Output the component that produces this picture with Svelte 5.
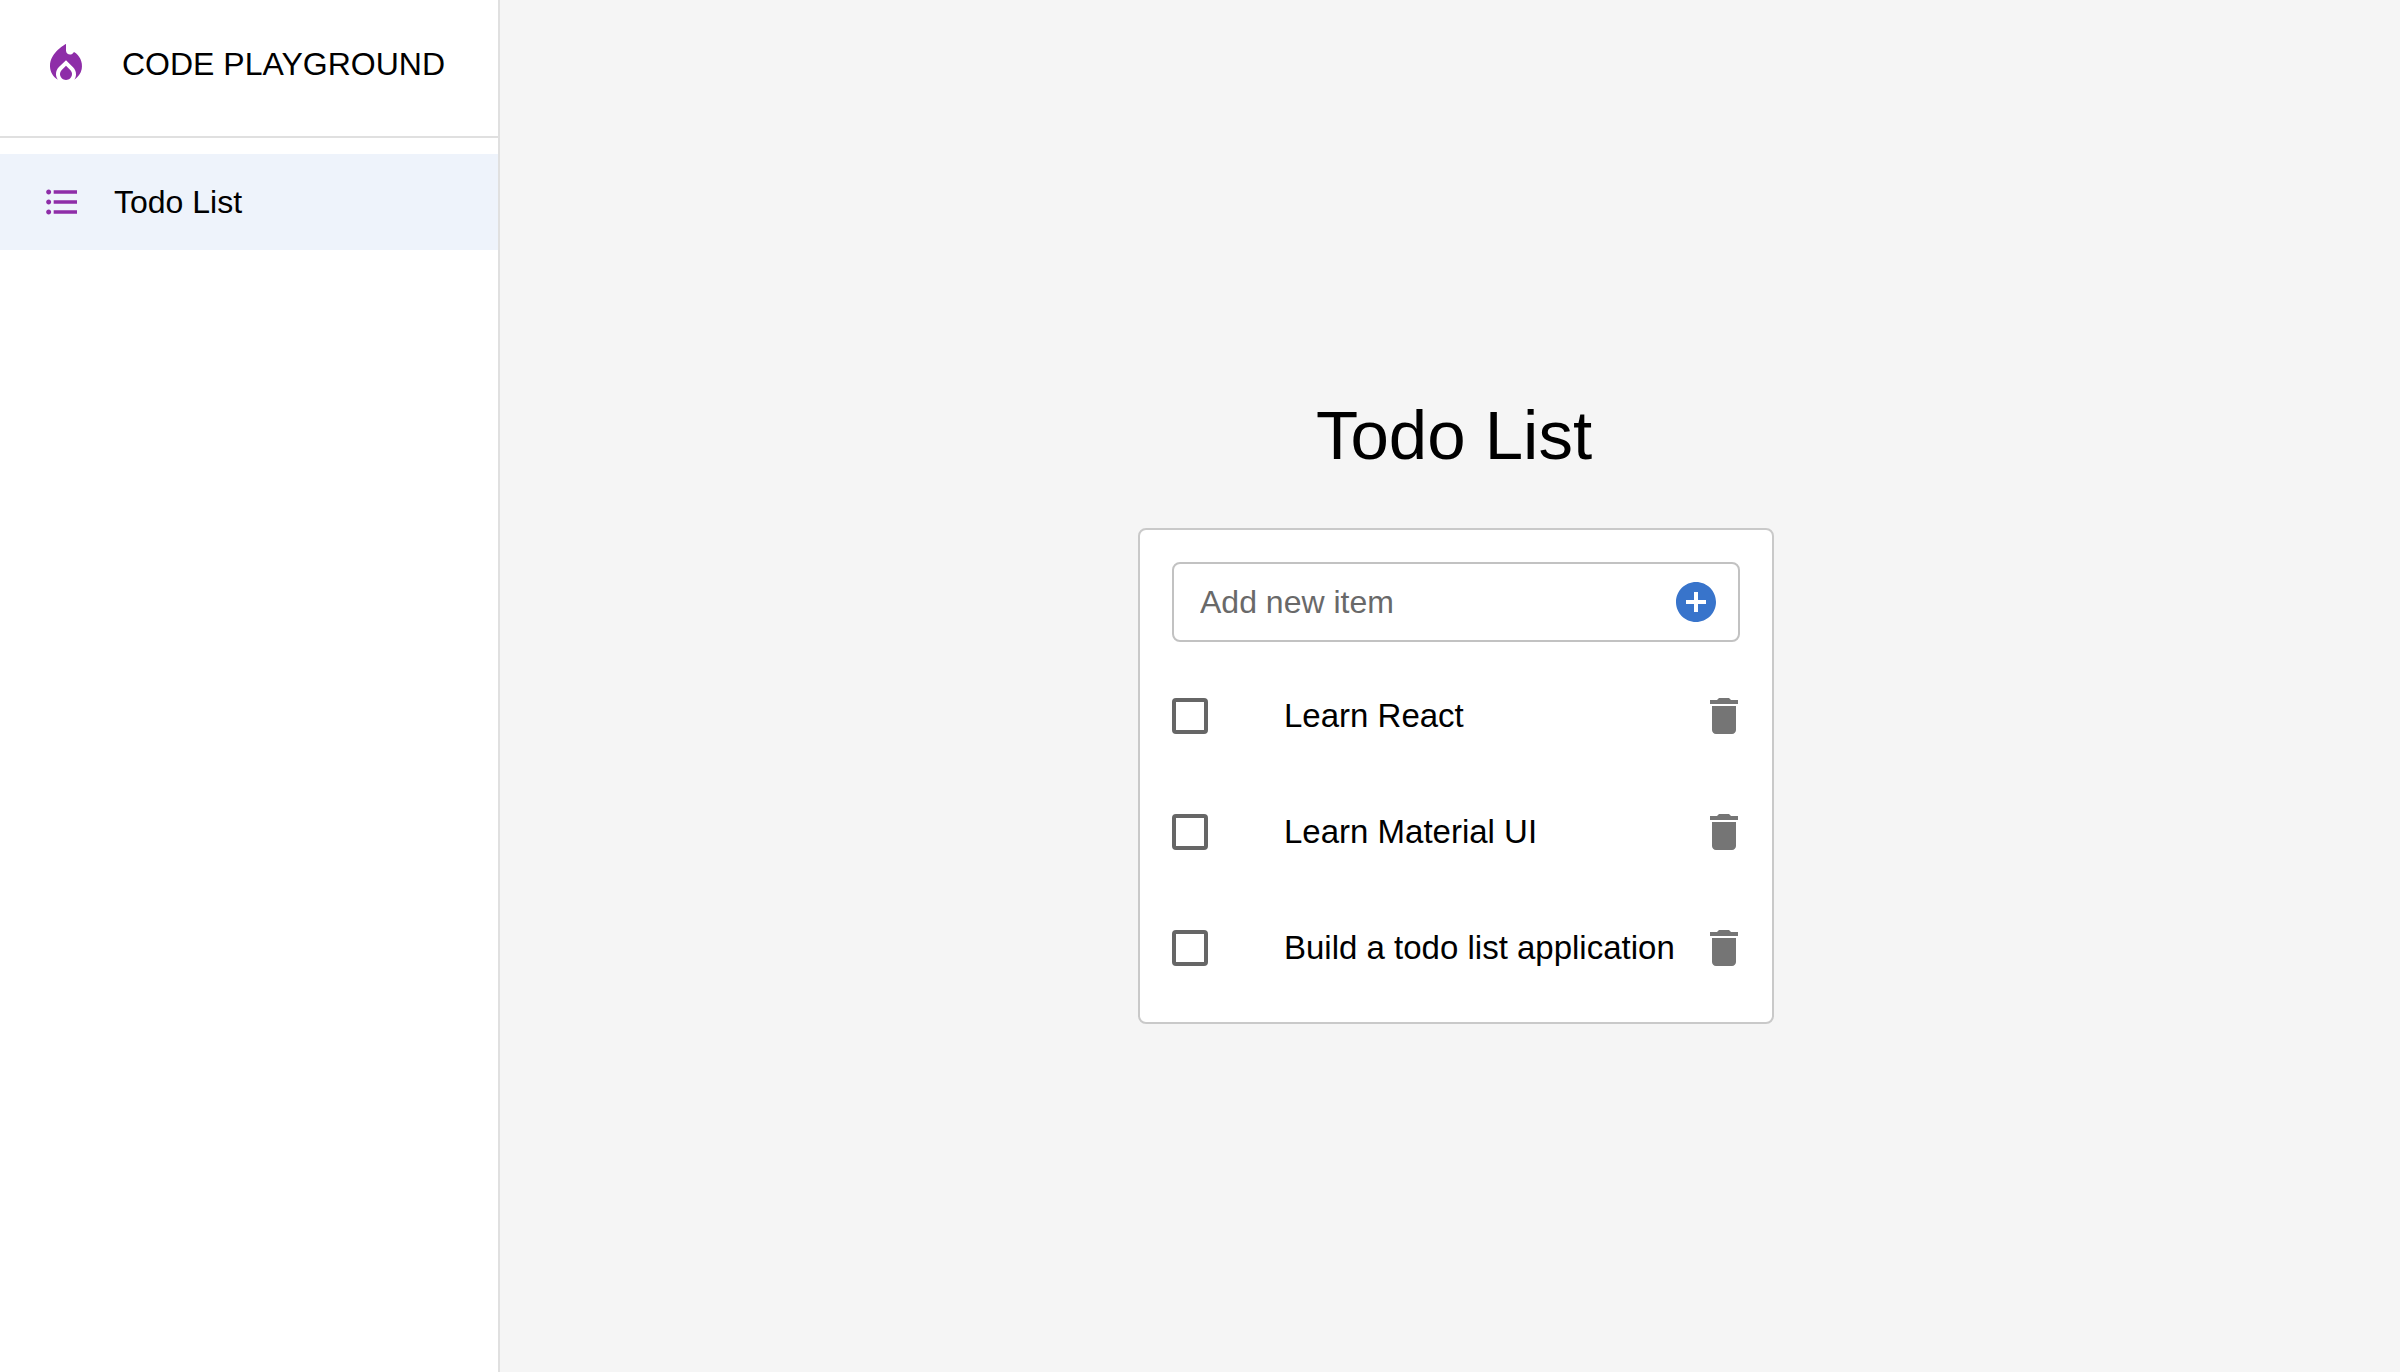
<script>
  let items = $state([
    { id: 1, text: 'Learn React', done: false },
    { id: 2, text: 'Learn Material UI', done: false },
    { id: 3, text: 'Build a todo list application', done: false }
  ]);
  let draft = $state('');
  let nextId = 4;

  function addItem(event) {
    event.preventDefault();
    const text = draft.trim();
    if (!text) return;
    items.push({ id: nextId++, text, done: false });
    draft = '';
  }

  function removeItem(id) {
    items = items.filter((item) => item.id !== id);
  }
</script>

<div class="app">
  <aside class="sidebar">
    <header class="brand">
      <svg class="icon" viewBox="0 0 24 24" aria-hidden="true">
        <path d="m12 12.9-2.13 2.09c-.56.56-.87 1.29-.87 2.07C9 18.68 10.35 20 12 20s3-1.32 3-2.94c0-.78-.31-1.52-.87-2.07L12 12.9z" />
        <path d="m16 6-.44.55C14.38 8.02 12 7.19 12 5.3V2S4 6 4 13c0 2.92 1.56 5.47 3.89 6.86-.56-.79-.89-1.76-.89-2.8 0-1.32.52-2.56 1.47-3.5L12 10.1l3.53 3.47c.95.93 1.47 2.17 1.47 3.5 0 1.02-.31 1.96-.85 2.75 1.89-1.15 3.29-3.06 3.71-5.3.66-3.55-1.07-6.9-3.86-8.52z" />
      </svg>
      <span>CODE PLAYGROUND</span>
    </header>
    <nav>
      <a class="nav-item" href="#todo-list" aria-current="page">
        <svg class="icon small" viewBox="0 0 24 24" aria-hidden="true">
          <path d="M4 10.5c-.83 0-1.5.67-1.5 1.5s.67 1.5 1.5 1.5 1.5-.67 1.5-1.5-.67-1.5-1.5-1.5zm0-6c-.83 0-1.5.67-1.5 1.5S3.17 7.5 4 7.5 5.5 6.83 5.5 6 4.83 4.5 4 4.5zm0 12c-.83 0-1.5.68-1.5 1.5s.68 1.5 1.5 1.5 1.5-.68 1.5-1.5-.67-1.5-1.5-1.5zM7 19h14v-2H7v2zm0-6h14v-2H7v2zm0-8v2h14V5H7z" />
        </svg>
        <span>Todo List</span>
      </a>
    </nav>
  </aside>

  <main>
    <h1>Todo List</h1>
    <section class="card">
      <form class="field" onsubmit={addItem}>
        <input type="text" placeholder="Add new item" aria-label="Add new item" bind:value={draft} />
        <button class="add" type="submit" aria-label="Add item">
          <svg class="icon" viewBox="0 0 24 24" aria-hidden="true">
            <path d="M12 2C6.48 2 2 6.48 2 12s4.48 10 10 10 10-4.48 10-10S17.52 2 12 2zm5 11h-4v4h-2v-4H7v-2h4V7h2v4h4v2z" />
          </svg>
        </button>
      </form>
      <ul>
        {#each items as item (item.id)}
          <li>
            <input type="checkbox" id="todo-{item.id}" bind:checked={item.done} />
            <label for="todo-{item.id}">{item.text}</label>
            <button class="delete" type="button" aria-label="Delete {item.text}" onclick={() => removeItem(item.id)}>
              <svg class="icon" viewBox="0 0 24 24" aria-hidden="true">
                <path d="M6 19c0 1.1.9 2 2 2h8c1.1 0 2-.9 2-2V7H6v12zM19 4h-3.5l-1-1h-5l-1 1H5v2h14V4z" />
              </svg>
            </button>
          </li>
        {/each}
      </ul>
    </section>
  </main>
</div>

<style>
  :global(body) {
    margin: 0;
  }

  .app {
    display: flex;
    min-height: 100vh;
    background: #f5f5f5;
    color: #000;
    font-family: Helvetica, 'Liberation Sans', Arial, sans-serif;
    font-size: 32px;
    line-height: 48px;
  }

  .app *,
  .app {
    box-sizing: border-box;
  }

  .icon {
    display: block;
    flex: none;
    width: 48px;
    height: 48px;
    fill: currentColor;
  }

  .icon.small {
    width: 40px;
    height: 40px;
  }

  .sidebar {
    flex: none;
    width: 500px;
    background: #fff;
    border-right: 2px solid #e0e0e0;
  }

  .brand,
  .nav-item {
    display: flex;
    align-items: center;
    gap: 32px;
    padding-left: 42px;
    white-space: nowrap;
  }

  .brand {
    padding-top: 40px;
    padding-bottom: 48px;
    border-bottom: 2px solid #e0e0e0;
  }

  .sidebar .icon {
    color: #8e2da8;
  }

  nav {
    padding: 16px 0;
  }

  .nav-item {
    padding-top: 24px;
    padding-bottom: 24px;
    background: #eef3fb;
    color: inherit;
    text-decoration: none;
  }

  main {
    flex: 1;
    min-width: 0;
    display: flex;
    flex-direction: column;
    align-items: center;
    justify-content: center;
    padding-left: 12px;
  }

  h1 {
    margin: 0;
    padding: 46px 4px 50px 0;
    font-size: 69px;
    line-height: 84px;
    font-weight: 400;
  }

  .card {
    width: 636px;
    max-width: 100%;
    padding: 32px 32px 0;
    background: #fff;
    border: 2px solid #c9c9c9;
    border-radius: 8px;
  }

  .field {
    display: flex;
    align-items: center;
    padding: 14px 18px 14px 26px;
    border: 2px solid #c2c2c2;
    border-radius: 8px;
  }

  .field input {
    flex: 1;
    min-width: 0;
    height: 48px;
    padding: 0;
    border: 0;
    outline: 0;
    background: none;
    color: inherit;
    font: inherit;
  }

  .field input::placeholder {
    color: #696969;
    opacity: 1;
  }

  button {
    flex: none;
    padding: 0;
    border: 0;
    background: none;
    cursor: pointer;
  }

  .add {
    color: #3874cb;
  }

  .delete {
    margin-right: -8px;
    color: #757575;
  }

  ul {
    margin: 0;
    padding: 16px 0;
    list-style: none;
  }

  li {
    display: flex;
    align-items: center;
    gap: 16px;
    padding: 34px 0;
  }

  li input {
    appearance: none;
    flex: none;
    width: 36px;
    height: 36px;
    margin: 0 60px 0 0;
    border: 4px solid #666;
    border-radius: 4px;
    cursor: pointer;
  }

  li input:checked {
    background: #3874cb;
    border-color: #3874cb;
  }

  label {
    flex: 1;
    font-size: 33px;
    white-space: nowrap;
  }
</style>
